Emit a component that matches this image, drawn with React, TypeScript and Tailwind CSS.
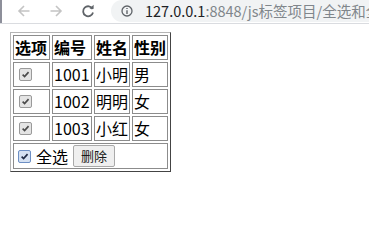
import React from "react";

const rows = [
  { id: "1001", name: "小明", sex: "男" },
  { id: "1002", name: "明明", sex: "女" },
  { id: "1003", name: "小红", sex: "女" },
];

function Box({ hover = false }: { hover?: boolean }) {
  return (
    <span
      className={`inline-flex h-[13px] w-[13px] items-center justify-center rounded-[2px] border ${
        hover ? "border-[#6d8fc4] bg-[#d5e1f2]" : "border-[#9a9a9a] bg-[#e4e4e4]"
      }`}
    >
      <svg viewBox="0 0 10 10" className="h-[9px] w-[9px]">
        <path d="M1.8 5.2 L4 7.4 L8.4 2.4" fill="none" stroke={hover ? "#1f2a44" : "#4a4a4a"} strokeWidth="1.8" />
      </svg>
    </span>
  );
}

const cell = "border border-[#8c8c8c] p-[1px] text-left align-middle";

export default function App() {
  return (
    <div className="relative h-[241px] w-[369px] overflow-hidden bg-white font-['Noto_Sans_CJK_SC',sans-serif] text-black">
      {/* browser chrome */}
      <div className="flex h-[24px] items-start border-b border-[#dadce0] bg-white">
        <div className="w-[2px] shrink-0 self-stretch bg-[#8d8f9a]" />
        <svg viewBox="0 0 14 14" className="ml-[15px] mt-[4px] h-[14px] w-[14px] shrink-0">
          <path d="M12.5 7 H2 M7 2 L2 7 L7 12" fill="none" stroke="#c4c4c4" strokeWidth="1.6" />
        </svg>
        <svg viewBox="0 0 14 14" className="ml-[18px] mt-[4px] h-[14px] w-[14px] shrink-0">
          <path d="M1.5 7 H12 M7 2 L12 7 L7 12" fill="none" stroke="#c4c4c4" strokeWidth="1.6" />
        </svg>
        <svg viewBox="0 0 14 14" className="ml-[18px] mt-[4px] h-[14px] w-[14px] shrink-0">
          <path d="M11.6 5 A5 5 0 1 0 12 8.5" fill="none" stroke="#5f6368" strokeWidth="1.8" />
          <path d="M8.5 4.8 H12.6 V0.8 Z" fill="#5f6368" />
        </svg>
        <div className="ml-[16px] flex h-[22px] min-w-0 flex-1 items-center overflow-hidden rounded-l-full bg-[#f1f3f4] pl-[10px] whitespace-nowrap">
          <svg viewBox="0 0 12 12" className="h-[12px] w-[12px] shrink-0">
            <circle cx="6" cy="6" r="5" fill="none" stroke="#5f6368" strokeWidth="1.3" />
            <path d="M6 5.2 V9 M6 3 V4" stroke="#5f6368" strokeWidth="1.4" />
          </svg>
          <span className="ml-[12px] text-[14.5px] leading-[18px] text-[#202124]">127.0.0.1</span>
          <span className="text-[14.5px] leading-[18px] text-[#80868b]">:8848/js标签项目/全选和全</span>
        </div>
      </div>

      {/* page body */}
      <div className="pl-[10px] pt-[8px]">
        <table className="border-separate border-spacing-[2px] border border-t-[#b5b5b5] border-l-[#b5b5b5] border-r-[#444] border-b-[#444] text-[16px] leading-[21px]">
          <thead>
            <tr className="font-bold">
              <th className={`${cell} w-[37px]`}>选项</th>
              <th className={`${cell} w-[40px]`}>编号</th>
              <th className={`${cell} w-[36px]`}>姓名</th>
              <th className={`${cell} w-[36px]`}>性别</th>
            </tr>
          </thead>
          <tbody>
            {rows.map((r) => (
              <tr key={r.id}>
                <td className={cell}>
                  <div className="flex h-[21px] items-center pl-[4px]">
                    <Box />
                  </div>
                </td>
                <td className={cell}>{r.id}</td>
                <td className={cell}>{r.name}</td>
                <td className={cell}>{r.sex}</td>
              </tr>
            ))}
            <tr>
              <td className={cell} colSpan={4}>
                <div className="flex h-[22px] items-center">
                  <span className="ml-[3px] flex">
                    <Box hover />
                  </span>
                  <span className="ml-[5px]">全选</span>
                  <button className="ml-[5px] h-[22px] rounded-[2px] border border-[#a9a9a9] bg-[#efefef] px-[7px] text-[13px] leading-[18px] text-[#1a1a1a]">
                    删除
                  </button>
                </div>
              </td>
            </tr>
          </tbody>
        </table>
      </div>
    </div>
  );
}
